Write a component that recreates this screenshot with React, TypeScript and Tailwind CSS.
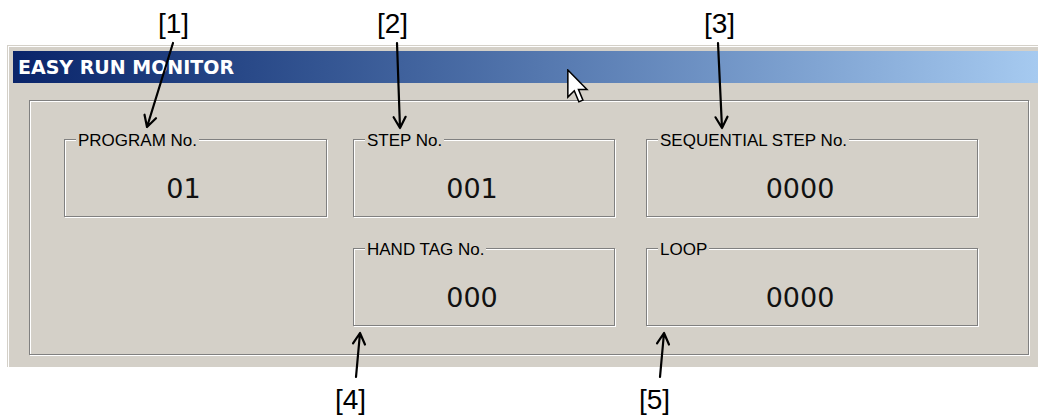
const etched = 'border border-[#808080] shadow-[inset_1px_1px_0_#ffffff,1px_1px_0_#ffffff]'

function arrowPath(x1: number, y1: number, x2: number, y2: number) {
  const dx = x2 - x1
  const dy = y2 - y1
  const len = Math.sqrt(dx * dx + dy * dy)
  const ux = dx / len
  const uy = dy / len
  const back = 11
  const side = 6
  const bx = x2 - ux * back
  const by = y2 - uy * back
  const ax = bx - uy * side
  const ay = by + ux * side
  const cx = bx + uy * side
  const cy = by - ux * side
  return `M${x1} ${y1} L${x2} ${y2} M${ax} ${ay} L${x2} ${y2} L${cx} ${cy}`
}

function GroupBox({ label, value, width }: { label: string; value: string; width: string }) {
  return (
    <div className={`relative h-[78px] ${width} ${etched}`}>
      <span className="absolute left-[11px] top-0 -translate-y-1/2 bg-[#d4d0c8] px-[2px] font-['Liberation_Sans',Arial,sans-serif] text-[17px] leading-none text-black">
        {label}
      </span>
      <div className="flex h-full items-center justify-center pt-[20px] pr-[24px] font-['DejaVu_Sans',sans-serif] text-[27px] leading-none text-[#111]">
        {value}
      </div>
    </div>
  )
}

export default function App() {
  const callout = "absolute font-['Liberation_Sans',Arial,sans-serif] text-[28px] leading-none text-black"

  return (
    <div className="relative h-[418px] w-[1038px] overflow-hidden bg-white">
      <div className="h-[45px]" />

      <div className="ml-[7px] border-l border-t border-[#d4d0c8] bg-[#d4d0c8] pb-[12px] pl-[5px] pt-[5px] shadow-[inset_1px_1px_0_#ffffff]">
        <div className="flex h-[32px] items-center bg-gradient-to-r from-[#0a246a] to-[#a6caf0] pl-[5px] font-['DejaVu_Sans',sans-serif] text-[19px] font-bold text-white">
          EASY RUN MONITOR
        </div>

        <div className={`ml-[16px] mt-[17px] h-[255px] w-[1000px] pl-[34px] pt-[38px] ${etched}`}>
          <div className="grid grid-cols-[289px_293px_332px] gap-y-[31px]">
            <GroupBox label="PROGRAM No." value="01" width="w-[263px]" />
            <GroupBox label="STEP No." value="001" width="w-[262px]" />
            <GroupBox label="SEQUENTIAL STEP No." value="0000" width="w-[332px]" />
            <div className="col-start-2">
              <GroupBox label="HAND TAG No." value="000" width="w-[262px]" />
            </div>
            <GroupBox label="LOOP" value="0000" width="w-[332px]" />
          </div>
        </div>
      </div>

      {/* callouts */}
      <span className={`${callout} left-[158px] top-[10px]`}>[1]</span>
      <span className={`${callout} left-[377px] top-[10px]`}>[2]</span>
      <span className={`${callout} left-[704px] top-[10px]`}>[3]</span>
      <span className={`${callout} left-[335px] top-[386px]`}>[4]</span>
      <span className={`${callout} left-[639px] top-[386px]`}>[5]</span>

      <svg className="pointer-events-none absolute left-0 top-0" width="1038" height="418">
        <g fill="none" stroke="#000" strokeWidth="2.2" strokeLinecap="round" strokeLinejoin="round">
          <path d={arrowPath(173, 43, 147, 127)} />
          <path d={arrowPath(397, 43, 400, 128)} />
          <path d={arrowPath(718, 43, 722, 128)} />
          <path d={arrowPath(356, 377, 360, 333)} />
          <path d={arrowPath(660, 377, 664, 333)} />
        </g>
      </svg>

      {/* mouse pointer */}
      <svg className="pointer-events-none absolute left-[567px] top-[69px]" width="22" height="35" viewBox="0 0 13 20.5">
        <path
          d="M0.5 0.5 L0.5 16.5 L4.3 12.8 L7 19.3 L9.4 18.3 L6.8 12 L11.8 12 Z"
          fill="#fff"
          stroke="#000"
          strokeWidth="0.9"
          strokeLinejoin="miter"
        />
      </svg>
    </div>
  )
}
